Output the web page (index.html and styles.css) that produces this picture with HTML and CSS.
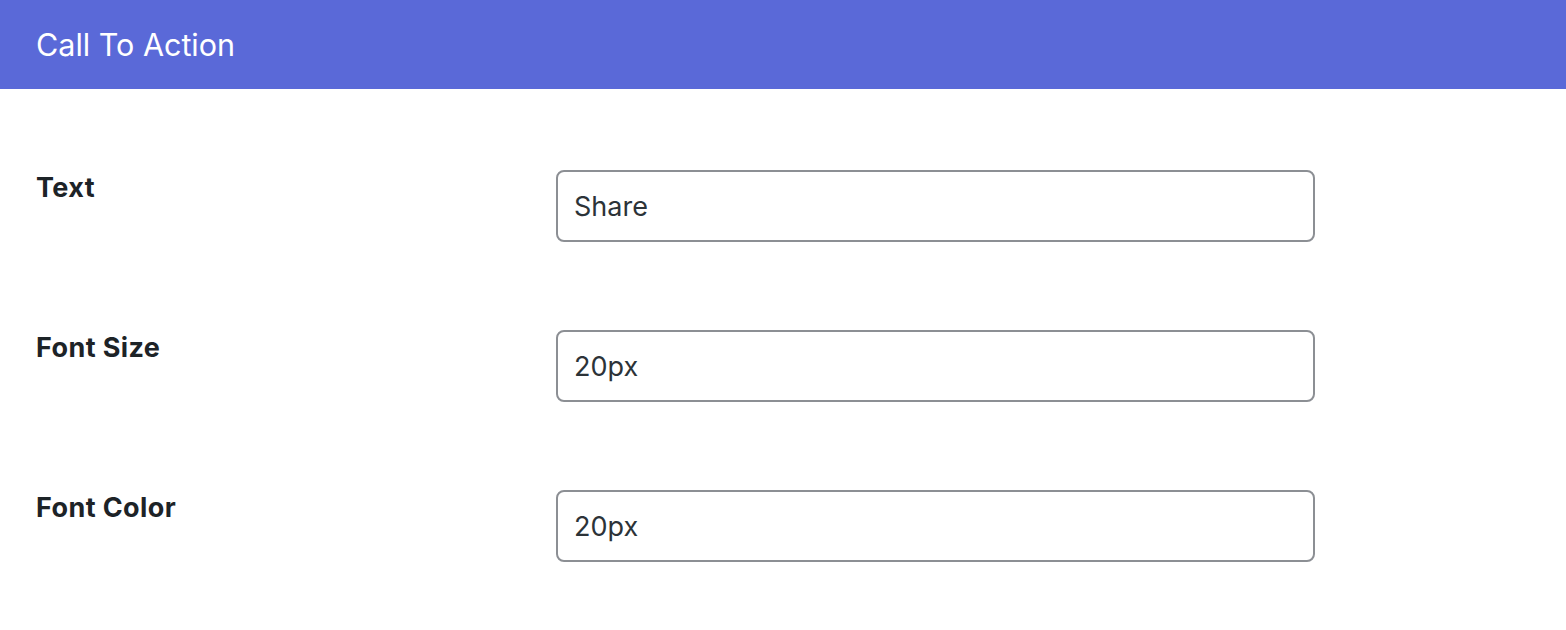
FILE: index.html
```html
<!DOCTYPE html>
<html lang="en">
<head>
<meta charset="utf-8">
<title>Call To Action</title>
<link rel="stylesheet" href="styles.css">
</head>
<body>
<header class="bar">
  <h1 class="bar-title">Call To Action</h1>
</header>
<main class="form">
  <div class="row">
    <label class="label" for="f-text">Text</label>
    <input class="field" id="f-text" type="text" value="Share">
  </div>
  <div class="row">
    <label class="label" for="f-size">Font Size</label>
    <input class="field" id="f-size" type="text" value="20px">
  </div>
  <div class="row">
    <label class="label" for="f-color">Font Color</label>
    <input class="field" id="f-color" type="text" value="20px">
  </div>
</main>
</body>
</html>
```

FILE: styles.css
```css
* { box-sizing: border-box; }
html, body {
  margin: 0;
  padding: 0;
  background: #ffffff;
  font-family: Inter, "Noto Sans", "Liberation Sans", sans-serif;
  color: #1d2327;
}
.bar {
  height: 89px;
  background: #5a69d8;
  display: flex;
  align-items: center;
  padding-left: 36px;
}
.bar-title {
  margin: 0;
  font-size: 30.5px;
  font-weight: 400;
  color: #ffffff;
}
.form {
  padding: 81px 36px 0 36px;
  display: flex;
  flex-direction: column;
  gap: 88px;
}
.row {
  display: grid;
  grid-template-columns: 520px 759px;
  align-items: start;
}
.label {
  font-size: 27px;
  font-weight: 700;
  line-height: 36px;
  letter-spacing: 0.4px;
  color: #1d2327;
}
.field {
  height: 72px;
  width: 759px;
  border: 2px solid #8c8f94;
  border-radius: 8px;
  padding: 0 16px;
  font-family: Inter, "Noto Sans", "Liberation Sans", sans-serif;
  font-size: 27px;
  color: #2c3338;
  background: #fff;
  outline: none;
}
```
